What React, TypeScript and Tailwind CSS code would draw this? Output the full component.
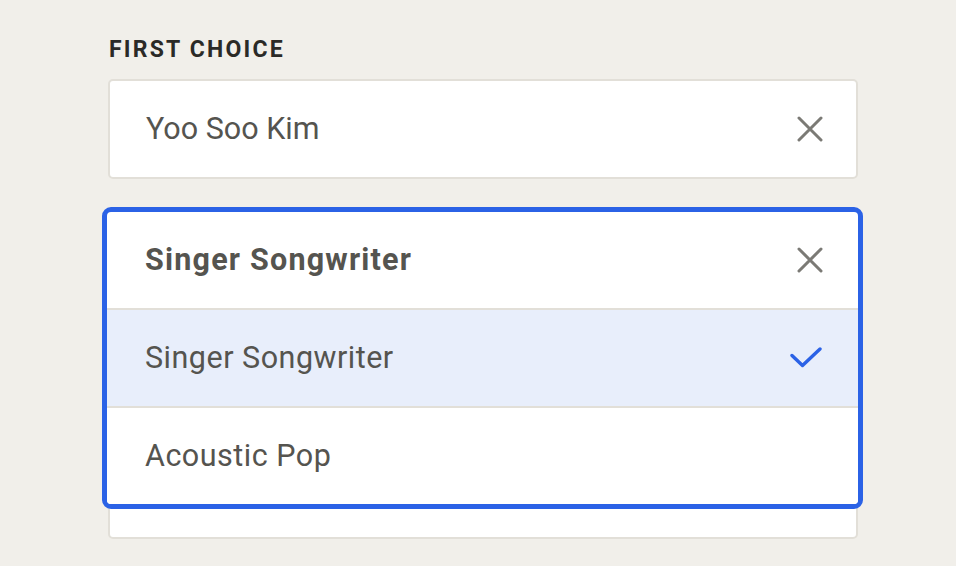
const options = ["Singer Songwriter", "Acoustic Pop"];

function CloseIcon() {
  return (
    <svg width="26" height="26" viewBox="0 0 26 26" className="text-[#7b7a75]">
      <path d="M2 2L24 24M24 2L2 24" stroke="currentColor" strokeWidth="3" strokeLinecap="round" />
    </svg>
  );
}

function CheckIcon() {
  return (
    <svg width="32" height="22" viewBox="0 0 32 22" className="text-[#2b62e6]">
      <path
        d="M2 8.5L12.5 18.5L30 2"
        fill="none"
        stroke="currentColor"
        strokeWidth="3.4"
        strokeLinecap="round"
        strokeLinejoin="round"
      />
    </svg>
  );
}

export default function App() {
  const selected = "Singer Songwriter";

  return (
    <div className="h-[566px] overflow-hidden bg-[#f1efea] pt-[35px] font-['Roboto',sans-serif]">
      <div className="ml-[108px] w-[750px]">
        <label className="block pl-[1px] text-[23px] font-bold uppercase leading-[30px] tracking-[2.2px] text-[#2b2a27]">
          First Choice
        </label>

        <div className="mt-[14px] flex h-[100px] items-center justify-between rounded-[5px] border-2 border-[#e2dfd8] bg-white pl-[36px] pr-[33px]">
          <span className="text-[30.5px] text-[#55544f]">Yoo Soo Kim</span>
          <CloseIcon />
        </div>

        <div className="relative mt-[28px] pt-[233px]">
          <div className="h-[99px] rounded-[5px] border-2 border-[#e2dfd8] bg-white" />

          <div className="absolute -left-[6px] -right-[5px] top-0 overflow-hidden rounded-[9px] border-[5px] border-[#2b62e6] bg-white">
            <div className="flex h-[96px] items-center justify-between pl-[38px] pr-[35px]">
              <span className="text-[30.5px] font-bold tracking-[1.2px] text-[#55544f]">{selected}</span>
              <CloseIcon />
            </div>
            {options.map((opt) => (
              <div
                key={opt}
                className={
                  "flex h-[98px] items-center justify-between border-t-2 border-[#e2dfd8] pl-[38px] pr-[36px] " +
                  (opt === selected ? "bg-[#e8eefb]" : "bg-white")
                }
              >
                <span className="text-[30.5px] tracking-[0.5px] text-[#55544f]">{opt}</span>
                {opt === selected && <CheckIcon />}
              </div>
            ))}
          </div>
        </div>
      </div>
    </div>
  );
}
